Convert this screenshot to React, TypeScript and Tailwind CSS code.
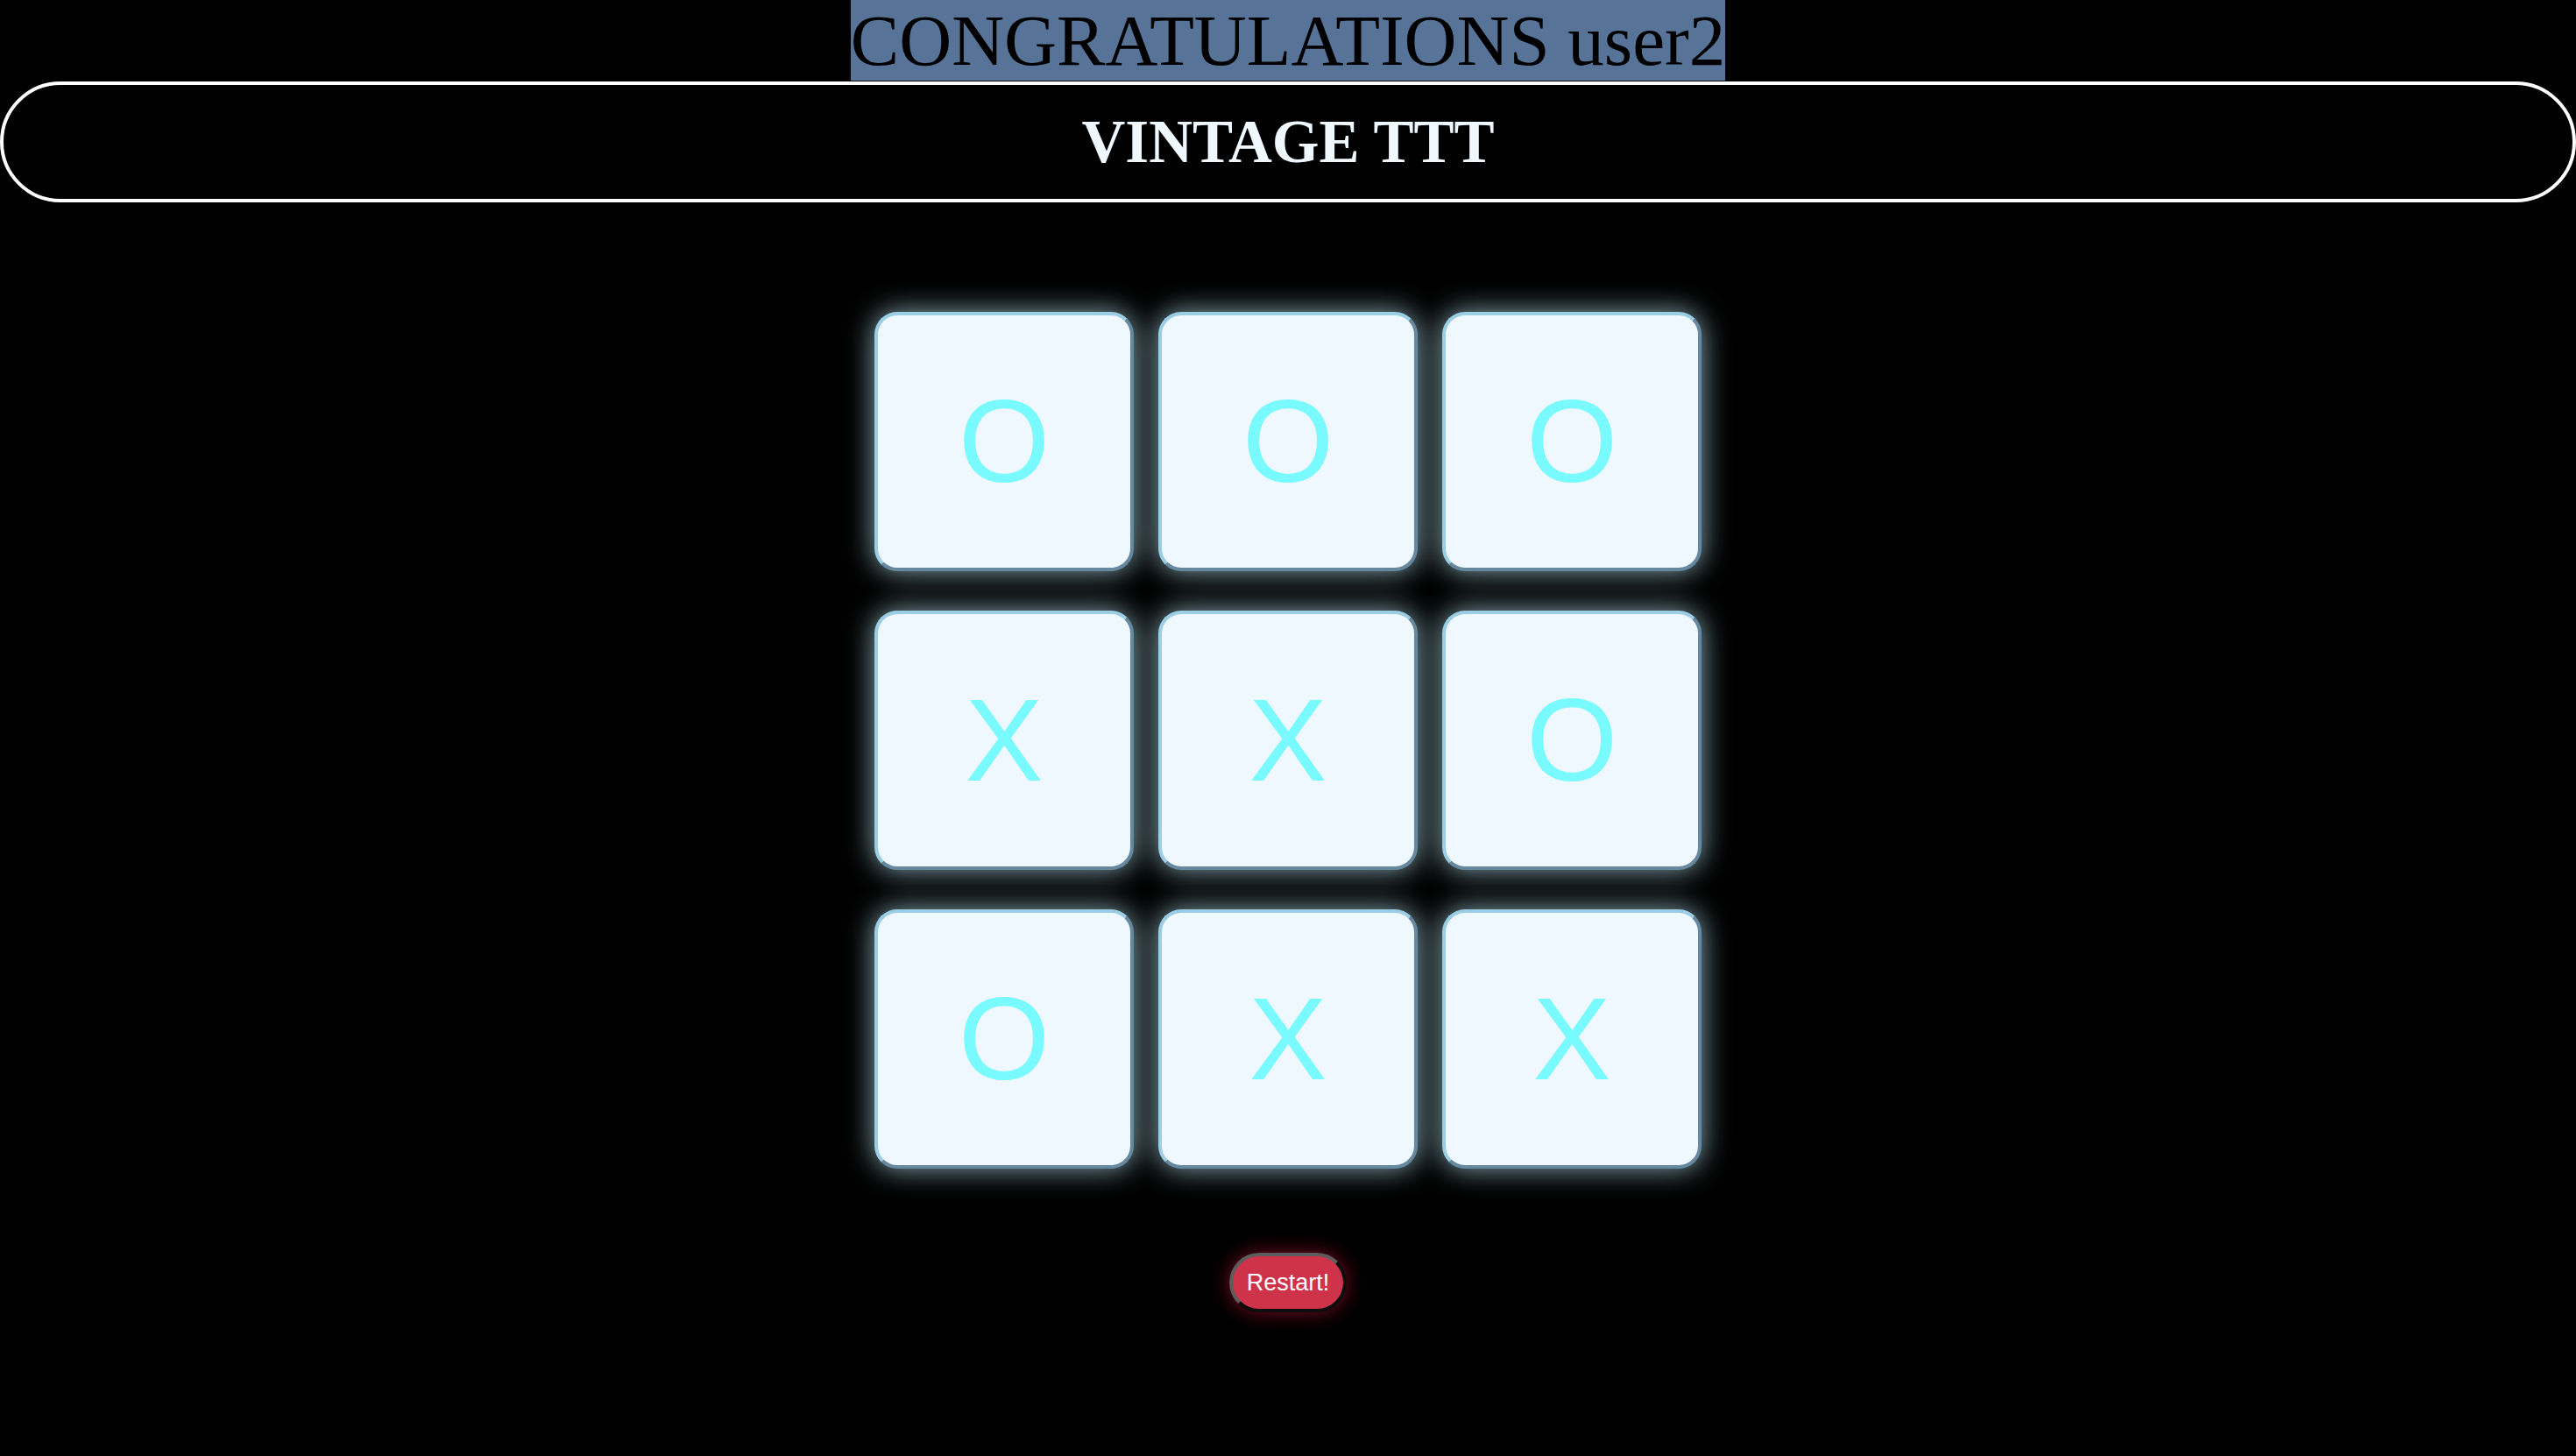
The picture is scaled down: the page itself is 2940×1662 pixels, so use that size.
import React from 'react';

const board: string[] = ['O', 'O', 'O', 'X', 'X', 'O', 'O', 'X', 'X'];

export default function App() {
  return (
    <div className="min-h-screen bg-black flex flex-col items-center">
      {/* Winner banner */}
      <h1 className="m-0 w-fit bg-[#587398] text-black font-['Liberation_Serif',serif] text-[83px] leading-[92px] font-normal">
        CONGRATULATIONS user2
      </h1>

      {/* Title bar */}
      <div className="mt-px w-full h-[138px] border-4 border-white rounded-full flex items-center justify-center">
        <h2 className="m-0 text-[#f0f8ff] font-['Liberation_Serif',serif] font-bold text-[69px] leading-none">
          VINTAGE TTT
        </h2>
      </div>

      {/* Board */}
      <div className="mt-[125px] grid grid-cols-3 gap-x-[28px] gap-y-[45px]">
        {board.map((mark, i) => (
          <div
            key={i}
            className="w-[296px] h-[296px] bg-[#f0f8ff] rounded-[26px] border-4 border-t-[#9bcde4] border-l-[#9bcde4] border-b-[#65889e] border-r-[#65889e] shadow-[0_0_32px_rgba(173,216,230,0.8)] flex items-center justify-center"
          >
            <span className="text-[#78fafe] font-['Liberation_Sans',Arial,sans-serif] text-[134px] leading-none">
              {mark}
            </span>
          </div>
        ))}
      </div>

      {/* Restart */}
      <button className="mt-[96px] w-[134px] h-[68px] rounded-full bg-[#cf3349] border-4 border-t-[#5c5c5c] border-l-[#5c5c5c] border-b-[#0d0d0d] border-r-[#0d0d0d] shadow-[0_0_22px_rgba(220,20,60,0.55)] text-white font-['Liberation_Sans',Arial,sans-serif] text-[27px] flex items-center justify-center">
        Restart!
      </button>
    </div>
  );
}
